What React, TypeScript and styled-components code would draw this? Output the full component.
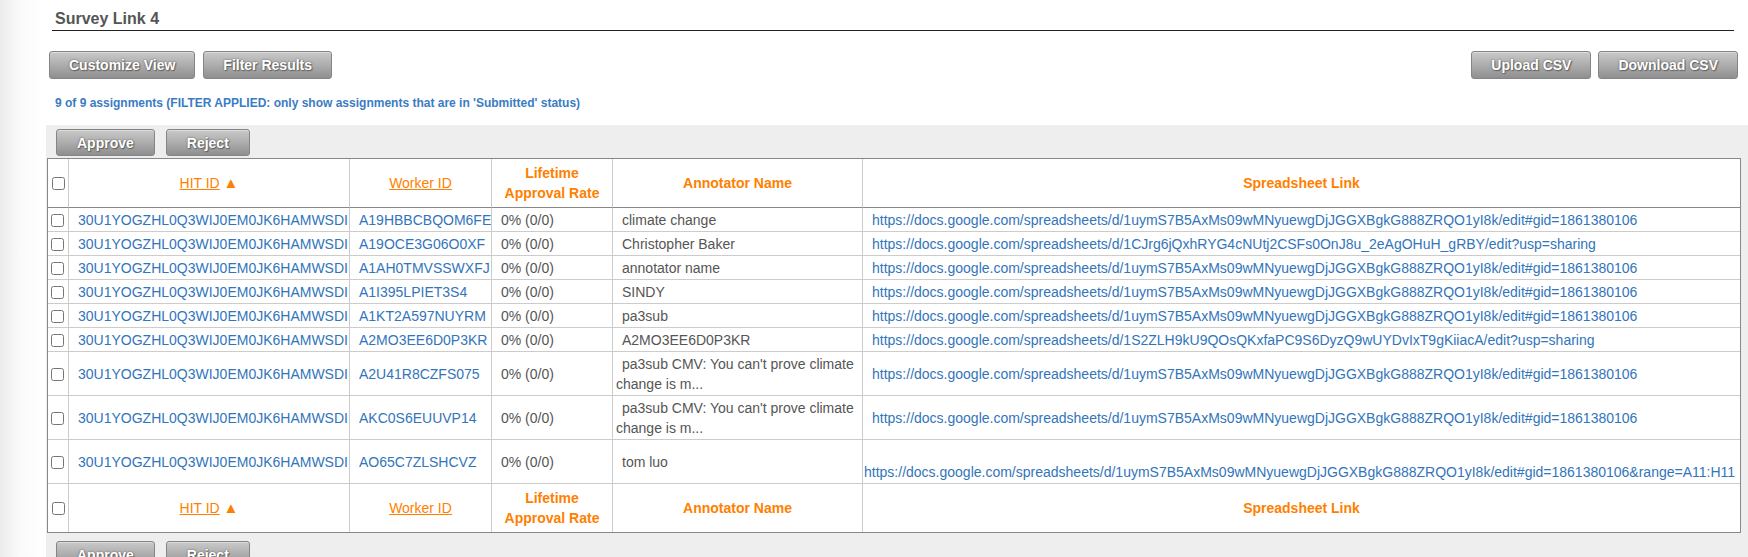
import React from 'react'
import styled, { createGlobalStyle } from 'styled-components'

const SHEET_A = 'https://docs.google.com/spreadsheets/d/1uymS7B5AxMs09wMNyuewgDjJGGXBgkG888ZRQO1yI8k/edit#gid=1861380106'
const SHEET_B = 'https://docs.google.com/spreadsheets/d/1CJrg6jQxhRYG4cNUtj2CSFs0OnJ8u_2eAgOHuH_gRBY/edit?usp=sharing'
const SHEET_C = 'https://docs.google.com/spreadsheets/d/1S2ZLH9kU9QOsQKxfaPC9S6DyzQ9wUYDvIxT9gKiiacA/edit?usp=sharing'
const HIT = '30U1YOGZHL0Q3WIJ0EM0JK6HAMWSDI'
const CMV = "pa3sub CMV: You can't prove climate change is m..."

type Assignment = {
    worker: string
    name: string
    link: string
    wrapLink?: boolean
}

const assignments: Assignment[] = [
    { worker: 'A19HBBCBQOM6FE', name: 'climate change', link: SHEET_A },
    { worker: 'A19OCE3G06O0XF', name: 'Christopher Baker', link: SHEET_B },
    { worker: 'A1AH0TMVSSWXFJ', name: 'annotator name', link: SHEET_A },
    { worker: 'A1I395LPIET3S4', name: 'SINDY', link: SHEET_A },
    { worker: 'A1KT2A597NUYRM', name: 'pa3sub', link: SHEET_A },
    { worker: 'A2MO3EE6D0P3KR', name: 'A2MO3EE6D0P3KR', link: SHEET_C },
    { worker: 'A2U41R8CZFS075', name: CMV, link: SHEET_A },
    { worker: 'AKC0S6EUUVP14', name: CMV, link: SHEET_A },
    { worker: 'AO65C7ZLSHCVZ', name: 'tom luo', link: SHEET_A + '&range=A11:H11', wrapLink: true },
]

const columnWidths = [20, 281, 142, 121, 250, 878]

const HeaderRow = ({ footer }: { footer?: boolean }) => (
    <tr>
        <Th $footer={ footer }><Check type="checkbox" /></Th>
        <Th $footer={ footer }><SortLink href="#">HIT ID</SortLink> <SortArrow>▲</SortArrow></Th>
        <Th $footer={ footer }><SortLink href="#">Worker ID</SortLink></Th>
        <Th $footer={ footer }>Lifetime<br />Approval Rate</Th>
        <Th $footer={ footer }>Annotator Name</Th>
        <Th $footer={ footer }>Spreadsheet Link</Th>
    </tr>
)

const ActionButtons = () => (
    <ActionBar>
        <GrayButton $short>Approve</GrayButton>
        <GrayButton $short>Reject</GrayButton>
    </ActionBar>
)

const App: React.FunctionComponent = () => (
    <Page>
        <GlobalStyle />
        <Title>Survey Link 4</Title>
        <Toolbar>
            <ButtonGroup>
                <GrayButton>Customize View</GrayButton>
                <GrayButton>Filter Results</GrayButton>
            </ButtonGroup>
            <ButtonGroup $gap={ 7 }>
                <GrayButton>Upload CSV</GrayButton>
                <GrayButton>Download CSV</GrayButton>
            </ButtonGroup>
        </Toolbar>
        <Status>9 of 9 assignments (FILTER APPLIED: only show assignments that are in 'Submitted' status)</Status>
        <Panel>
            <ActionButtons />
            <Table>
                <colgroup>
                    { columnWidths.map((width, index) => (
                        <col key={ index } style={{ width }} />
                    )) }
                </colgroup>
                <thead>
                    <HeaderRow />
                </thead>
                <tbody>
                    { assignments.map((row, index) => (
                        <tr key={ index }>
                            <Td $box><Check type="checkbox" /></Td>
                            <Td $nowrap><Link href="#">{ HIT }</Link></Td>
                            <Td $nowrap><Link href="#">{ row.worker }</Link></Td>
                            <Td $nowrap>0% (0/0)</Td>
                            <Td>{ row.name }</Td>
                            <Td $nowrap $tight={ row.wrapLink }>
                                { row.wrapLink && <br /> }
                                <Link href="#">{ row.link }</Link>
                            </Td>
                        </tr>
                    )) }
                </tbody>
                <tfoot>
                    <HeaderRow footer />
                </tfoot>
            </Table>
            <ActionButtons />
        </Panel>
    </Page>
)

export default App

const GlobalStyle = createGlobalStyle`
    html, body {
        margin: 0;
        overflow: hidden;
    }
    body {
        font-family: "Liberation Sans", Arial, sans-serif;
        background: linear-gradient(to right, #ebebeb 0, #fafafa 20px, #fff 42px);
    }
`

const Page = styled.div`
    padding-left: 46px;
    min-height: 100vh;
`

const Title = styled.div`
    margin: 0 14px 0 6px;
    padding: 9px 0 1px 3px;
    font-size: 16px;
    font-weight: bold;
    line-height: 20px;
    color: #555;
    border-bottom: 1px solid #222;
`

const Toolbar = styled.div`
    display: flex;
    justify-content: space-between;
    margin: 20px 10px 0 3px;
`

const ButtonGroup = styled.div<{ $gap?: number }>`
    display: flex;
    gap: ${ props => props.$gap ?? 8 }px;
`

const GrayButton = styled.button<{ $short?: boolean }>`
    height: ${ props => props.$short ? 27 : 28 }px;
    padding: 0 ${ props => props.$short ? 20 : 19 }px;
    border: 1px solid #858585;
    border-radius: 3px;
    background: linear-gradient(to bottom, #c9c9c9 0%, #adadad 50%, #8f8f8f 100%);
    box-shadow: inset 0 1px 0 rgba(255, 255, 255, 0.35);
    color: #fff;
    font-family: "Liberation Sans", Arial, sans-serif;
    font-size: 14px;
    font-weight: bold;
    text-shadow: 0 0 2px #555, 1px 1px 1px #666;
    cursor: pointer;
`

const Status = styled.div`
    margin-top: 16px;
    padding-left: 9px;
    font-size: 12px;
    font-weight: bold;
    line-height: 17px;
    color: #3a7cc3;
`

const Panel = styled.div`
    margin-top: 13px;
    padding: 4px 0 8px 1px;
    background: #eee;
`

const ActionBar = styled.div`
    display: flex;
    gap: 11px;
    padding-left: 9px;
    margin-bottom: 2px;

    table + & {
        margin: 8px 0 0;
    }
`

const Table = styled.table`
    width: 1694px;
    table-layout: fixed;
    border-collapse: separate;
    border-spacing: 0;
    border: 1px solid #888;
    background: #fff;
    font-size: 14px;
    line-height: 20px;
`

const Th = styled.th<{ $footer?: boolean }>`
    padding: 4px 3px;
    text-align: center;
    vertical-align: middle;
    font-weight: bold;
    color: #ff7f00;
    border-left: 1px solid #ccc;
    border-bottom: ${ props => props.$footer ? 'none' : '1px solid #888' };

    &:first-child {
        border-left: none;
        padding: 0;
    }
`

const Td = styled.td<{ $nowrap?: boolean; $box?: boolean; $tight?: boolean }>`
    padding: ${ props => props.$box ? '0' : props.$tight ? '2px 1px 1px' : '2px 3px 1px' };
    text-indent: ${ props => props.$box ? 0 : 6 }px;
    vertical-align: middle;
    color: #555;
    white-space: ${ props => props.$nowrap ? 'nowrap' : 'normal' };
    border-left: 1px solid #ccc;
    border-bottom: 1px solid #ccc;

    &:first-child {
        border-left: none;
    }
`

const Check = styled.input`
    margin: 3px 3px 3px 3px;
    vertical-align: middle;
`

const Link = styled.a`
    color: #3275bb;
    text-decoration: none;
`

const SortLink = styled.a`
    color: #ff7f00;
    font-weight: normal;
    text-decoration: underline;
`

const SortArrow = styled.span`
    font-size: 15px;
    color: #ff7f00;
`
